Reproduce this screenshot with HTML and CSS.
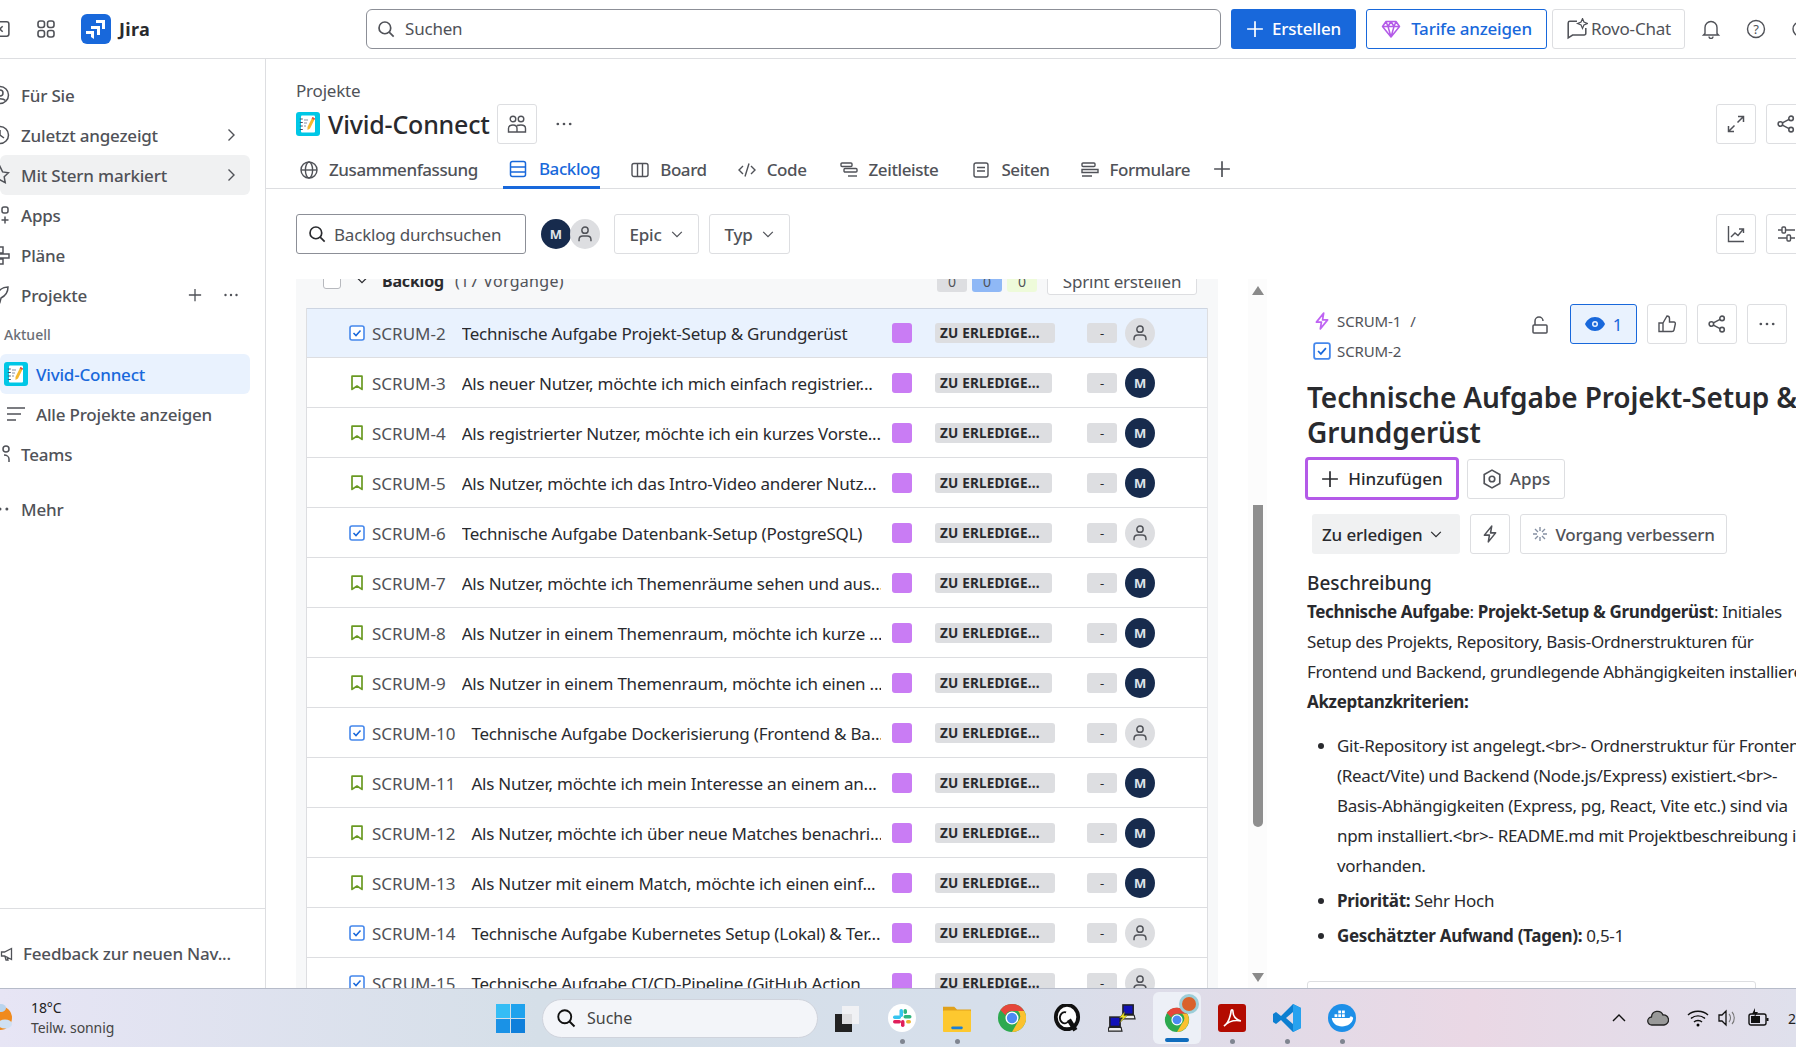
FILE: index.html
```html
<!DOCTYPE html>
<html lang="de">
<head>
<meta charset="utf-8">
<title>Jira – Vivid-Connect Backlog</title>
<link rel="stylesheet" href="styles.css">
</head>
<body>
<svg class="defs" width="0" height="0">
  <symbol id="task" viewBox="0 0 16 16"><rect x="1" y="1" width="14" height="14" rx="2" fill="#fff" stroke="#4688ec" stroke-width="1.6"/><path d="M4.5 8l2.5 2.6 4.5-5.2" fill="none" stroke="#1868db" stroke-width="1.5"/></symbol>
  <symbol id="story" viewBox="0 0 16 16"><path d="M3 1.2h10v13.2l-5-3.4-5 3.4z" fill="none" stroke="#6a9a23" stroke-width="1.7" stroke-linejoin="round"/></symbol>
  <symbol id="person" viewBox="0 0 16 16"><circle cx="8" cy="4.6" r="2.8" fill="none" stroke="currentColor" stroke-width="1.3"/><path d="M2.7 14.5v-1.5c0-2 1.5-3.2 3.4-3.2h3.8c1.900 0 3.400 1.200 3.400 3.200v1.500" fill="none" stroke="currentColor" stroke-width="1.3"/></symbol>
  <symbol id="chev" viewBox="0 0 16 16"><path d="M5.500 2.500l5.500 5.500-5.500 5.500" fill="none" stroke="currentColor" stroke-width="1.400"/></symbol>
  <symbol id="down" viewBox="0 0 16 16"><path d="M2.500 5.500l5.500 5.500 5.500-5.500" fill="none" stroke="currentColor" stroke-width="1.400"/></symbol>
  <symbol id="plus" viewBox="0 0 16 16"><path d="M8 1v14M1 8h14" fill="none" stroke="currentColor" stroke-width="1.500"/></symbol>
  <symbol id="dots" viewBox="0 0 16 16"><circle cx="2.500" cy="8" r="1.200" fill="currentColor"/><circle cx="8" cy="8" r="1.200" fill="currentColor"/><circle cx="13.500" cy="8" r="1.200" fill="currentColor"/></symbol>
  <symbol id="search" viewBox="0 0 16 16"><circle cx="7" cy="7" r="5.200" fill="none" stroke="currentColor" stroke-width="1.500"/><path d="M10.800 10.800l4 4" stroke="currentColor" stroke-width="1.500"/></symbol>
  <symbol id="share" viewBox="0 0 16 16"><g fill="none" stroke="currentColor" stroke-width="1.400"><circle cx="3" cy="8" r="2"/><circle cx="12.500" cy="3" r="2"/><circle cx="12.500" cy="13" r="2"/><path d="M4.800 7l5.900-3.100M4.800 9l5.900 3.100"/></g></symbol>
  <symbol id="project" viewBox="0 0 24 24"><rect width="24" height="24" rx="3" fill="#00c7e6"/><rect x="5" y="3.500" width="14" height="17" rx="1" fill="#fff"/><path d="M3.800 7h3M3.800 10.500h3M3.800 14h3M3.800 17.500h3" stroke="#44546f" stroke-width="1"/><path d="M8 8h4M8 11h3M8 14h2" stroke="#8590a2" stroke-width="1"/><path d="M16.500 5l2.500 1.500-5 10-2.500 1.500 0-3z" fill="#f5b82e"/><path d="M16.500 5l2.500 1.500-.8 1.500-2.500-1.500z" fill="#e5484d"/></symbol>
  <symbol id="bolt" viewBox="0 0 16 16"><path d="M9.500 1L3 9h4.500l-1 6L13 7H8.500z" fill="none" stroke="currentColor" stroke-width="1.400" stroke-linejoin="round"/></symbol>
</svg>

<div class="app">
  <header class="topbar">
    <svg class="tb-collapse" viewBox="0 0 16 16"><rect x="1" y="1.500" width="14" height="13" rx="2" fill="none" stroke="currentColor" stroke-width="1.400"/><path d="M9.500 5.500L7 8l2.500 2.500" fill="none" stroke="currentColor" stroke-width="1.300"/></svg>
    <svg class="tb-grid" viewBox="0 0 18 18"><g fill="none" stroke="currentColor" stroke-width="1.600"><rect x="1" y="1" width="6.500" height="6.500" rx="2.200"/><rect x="10.500" y="1" width="6.500" height="6.500" rx="2.200"/><rect x="1" y="10.500" width="6.500" height="6.500" rx="2.200"/><rect x="10.500" y="10.500" width="6.500" height="6.500" rx="2.200"/></g></svg>
    <svg class="tb-logo" viewBox="0 0 30 30"><rect width="30" height="30" rx="6" fill="#1868db"/><path d="M15 6h9v9h-3V9h-6zM10 12h9v9h-3v-6h-6zM5 17h8v8l-3-2v-3H5z" fill="#fff"/></svg>
    <span class="tb-name">Jira</span>
    <div class="tb-search"><svg class="ic18"><use href="#search"/></svg><span>Suchen</span></div>
    <button class="tb-btn create"><svg class="ic18"><use href="#plus"/></svg>Erstellen</button>
    <button class="tb-btn plans"><svg class="ic20" viewBox="0 0 20 20"><path d="M5 2.500h10l3.500 5L10 18 1.500 7.500zM1.500 7.500h17M7 7.500L10 18l3-10.500M5 2.500l2 5 3-5 3 5 2-5" fill="none" stroke="#b45ae8" stroke-width="1.500" stroke-linejoin="round"/></svg>Tarife anzeigen</button>
    <button class="tb-btn rovo"><svg class="ic22" viewBox="0 0 20 20"><path d="M10 3H3.500A1.500 1.500 0 0 0 2 4.500V18l4-2.500h10.500A1.500 1.500 0 0 0 18 14V9" fill="none" stroke="currentColor" stroke-width="1.400"/><path d="M15 .500l1.300 3.200 3.200 1.300-3.200 1.300L15 9.500l-1.300-3.200L10.500 5l3.200-1.300z" fill="none" stroke="currentColor" stroke-width="1.100"/></svg>Rovo-Chat</button>
    <svg class="tb-ico bell" viewBox="0 0 20 20"><path d="M4 14.500V8.500a6 6 0 0 1 12 0v6l1.500 1.500h-15zM8 17.500a2 2 0 0 0 4 0" fill="none" stroke="currentColor" stroke-width="1.400"/></svg>
    <svg class="tb-ico help" viewBox="0 0 20 20"><circle cx="10" cy="10" r="8.500" fill="none" stroke="currentColor" stroke-width="1.400"/><text x="10" y="14.500" text-anchor="middle" class="help-q">?</text></svg>
    <svg class="tb-ico gear" viewBox="0 0 20 20"><circle cx="10" cy="10" r="7" fill="none" stroke="currentColor" stroke-width="1.400"/></svg>
  </header>

  <div class="body">
    <nav class="sidebar">
      <a class="nav"><svg class="nav-i" viewBox="0 0 20 20"><circle cx="10" cy="10" r="8.500" fill="none" stroke="currentColor" stroke-width="1.500"/><circle cx="10" cy="8" r="3" fill="none" stroke="currentColor" stroke-width="1.500"/><path d="M4.500 15.500c2-2.500 9-2.500 11 0" fill="none" stroke="currentColor" stroke-width="1.500"/></svg><span>Für Sie</span></a>
      <a class="nav"><svg class="nav-i" viewBox="0 0 20 20"><circle cx="10" cy="10" r="8.500" fill="none" stroke="currentColor" stroke-width="1.500"/><path d="M10 5v5l4 3" fill="none" stroke="currentColor" stroke-width="1.500"/></svg><span>Zuletzt angezeigt</span><svg class="nav-r"><use href="#chev"/></svg></a>
      <a class="nav hover"><svg class="nav-i" viewBox="0 0 20 20"><path d="M10 1.500l2.600 5.400 5.900.8-4.300 4.100 1 5.900-5.200-2.800-5.200 2.800 1-5.900L1.500 7.700l5.900-.8z" fill="none" stroke="currentColor" stroke-width="1.500"/></svg><span>Mit Stern markiert</span><svg class="nav-r"><use href="#chev"/></svg></a>
      <a class="nav"><svg class="nav-i" viewBox="0 0 20 20"><g fill="none" stroke="currentColor" stroke-width="1.500"><rect x="2" y="2" width="6" height="6" rx="2"/><rect x="12" y="2" width="6" height="6" rx="2"/><rect x="2" y="12" width="6" height="6" rx="2"/><path d="M15 11.500v7M11.500 15h7"/></g></svg><span>Apps</span></a>
      <a class="nav"><svg class="nav-i" viewBox="0 0 20 20"><g fill="none" stroke="currentColor" stroke-width="1.500"><path d="M3 2h10v6H3zM3 9h16v4H3zM3 14h10v5H3z"/></g></svg><span>Pläne</span></a>
      <a class="nav"><svg class="nav-i" viewBox="0 0 20 20"><path d="M18 2c-5 0-9 3-11 7l-4 1 3 2-1 3 3-1 2 3 1-4c4-2 7-6 7-11z" fill="none" stroke="currentColor" stroke-width="1.500"/></svg><span>Projekte</span><svg class="nav-plus"><use href="#plus"/></svg><svg class="nav-dots"><use href="#dots"/></svg></a>
      <div class="nav-label">Aktuell</div>
      <a class="nav active sub"><svg class="proj-i"><use href="#project"/></svg><span>Vivid-Connect</span></a>
      <a class="nav sub"><svg class="all-i" viewBox="0 0 18 14"><path d="M0 1h18M0 7h14M0 13h9" stroke="currentColor" stroke-width="1.400"/></svg><span>Alle Projekte anzeigen</span></a>
      <a class="nav"><svg class="nav-i" viewBox="0 0 20 20"><g fill="none" stroke="currentColor" stroke-width="1.500"><circle cx="6" cy="5" r="3"/><circle cx="16" cy="5" r="3"/><path d="M1 18v-3c0-2 2-4 5-4 1 0 2 0 3 1M19 18v-3c0-2-2-4-5-4"/></g></svg><span>Teams</span></a>
      <a class="nav more"><svg class="nav-i"><use href="#dots"/></svg><span>Mehr</span></a>
      <a class="feedback"><svg class="fb-i" viewBox="0 0 16 16"><path d="M1.500 6v4h3l7 3.500V2.500l-7 3.500zM5 10.500l1 3.500h2l-1-3" fill="none" stroke="currentColor" stroke-width="1.300"/></svg><span>Feedback zur neuen Nav...</span></a>
    </nav>

    <main class="main">
      <div class="head">
        <div class="crumb">Projekte</div>
        <div class="title-row">
          <svg class="title-ic"><use href="#project"/></svg>
          <h1>Vivid-Connect</h1>
          <button class="sq people"><svg class="ic20" viewBox="0 0 20 20"><g fill="none" stroke="currentColor" stroke-width="1.400"><circle cx="6" cy="5" r="2.800"/><circle cx="14" cy="5" r="2.800"/><path d="M1.500 18v-3.500c0-2 1.800-3.500 4.500-3.500s4 1.500 4 3.500V18zM10 11.500c1-.5 2.500-.5 4-.5 2.700 0 4.500 1.500 4.500 3.500V18H10"/></g></svg></button>
          <svg class="title-dots"><use href="#dots"/></svg>
          <div class="head-right">
            <button class="sq"><svg class="ic18" viewBox="0 0 18 18"><path d="M11 1.500h5.500V7M16.500 1.500l-6 6M7 16.500H1.500V11M1.500 16.500l6-6" fill="none" stroke="currentColor" stroke-width="1.500"/></svg></button>
            <button class="sq"><svg class="ic18"><use href="#share"/></svg></button>
          </div>
        </div>
      </div>

      <div class="tabs">
        <a class="tab"><svg class="ic18" viewBox="0 0 18 18"><g fill="none" stroke="currentColor" stroke-width="1.400"><circle cx="9" cy="9" r="8"/><ellipse cx="9" cy="9" rx="3.600" ry="8"/><path d="M1 9h16"/></g></svg>Zusammenfassung</a>
        <a class="tab current"><svg class="ic18" viewBox="0 0 18 18"><g fill="none" stroke="currentColor" stroke-width="1.500"><rect x="1.500" y="1.500" width="15" height="15" rx="2"/><path d="M1.500 7h15M1.500 12h15"/></g></svg>Backlog</a>
        <a class="tab"><svg class="ic18" viewBox="0 0 18 18"><g fill="none" stroke="currentColor" stroke-width="1.400"><rect x="1" y="2.500" width="16" height="13" rx="2"/><path d="M6.500 2.500v13M11.500 2.500v13"/></g></svg>Board</a>
        <a class="tab"><svg class="ic18" viewBox="0 0 18 18"><path d="M5 5L1 9l4 4M13 5l4 4-4 4M11 2.500L7 15.500" fill="none" stroke="currentColor" stroke-width="1.400"/></svg>Code</a>
        <a class="tab"><svg class="ic18" viewBox="0 0 18 18"><g fill="none" stroke="currentColor" stroke-width="1.400"><rect x="1" y="2" width="11" height="3.500" rx="1"/><rect x="4" y="7.500" width="13" height="3.500" rx="1"/><path d="M8 15h9"/></g></svg>Zeitleiste</a>
        <a class="tab"><svg class="ic18" viewBox="0 0 18 18"><g fill="none" stroke="currentColor" stroke-width="1.400"><rect x="2" y="2" width="14" height="14" rx="2"/><path d="M5 6.500h8M5 10h8"/></g></svg>Seiten</a>
        <a class="tab"><svg class="ic18" viewBox="0 0 18 18"><g fill="none" stroke="currentColor" stroke-width="1.400"><rect x="1" y="2" width="13" height="3.500" rx="1"/><path d="M1 8.500h16v3H1zM1 15h10"/></g></svg>Formulare</a>
        <svg class="tab-plus"><use href="#plus"/></svg>
      </div>

      <div class="tools">
        <div class="bl-search"><svg class="ic18"><use href="#search"/></svg><span>Backlog durchsuchen</span></div>
        <div class="avas"><span class="ava m">M</span><span class="ava u"><svg class="ic18"><use href="#person"/></svg></span></div>
        <button class="filter">Epic<svg class="ic14"><use href="#down"/></svg></button>
        <button class="filter">Typ<svg class="ic14"><use href="#down"/></svg></button>
        <div class="tools-right">
          <button class="sq"><svg class="ic18" viewBox="0 0 18 18"><path d="M1.500 1v15.500H17M4 12l4-4 3 2.500 5-6M12 4h4.500v4" fill="none" stroke="currentColor" stroke-width="1.400"/></svg></button>
          <button class="sq"><svg class="ic18" viewBox="0 0 18 18"><g fill="none" stroke="currentColor" stroke-width="1.400"><path d="M1 5h4M9 5h9M1 13h9M14 13h4"/><rect x="5" y="2" width="3.500" height="6" rx="1"/><rect x="10" y="10" width="3.500" height="6" rx="1"/></g></svg></button>
        </div>
      </div>

      <div class="content">
        <section class="backlog">
          <div class="bl-head">
            <span class="bl-check"></span>
            <svg class="bl-chev"><use href="#down"/></svg>
            <b class="bl-name">Backlog</b><span class="bl-count">(17 Vorgänge)</span>
            <span class="badges"><i class="bd grey">0</i><i class="bd blue">0</i><i class="bd green">0</i></span>
            <button class="sprint">Sprint erstellen</button>
          </div>
          <div class="rows">
            <div class="row selected"><svg class="ti"><use href="#task"/></svg><span class="key">SCRUM-2</span><span class="sum">Technische Aufgabe Projekt-Setup &amp; Grundgerüst</span><span class="epic"></span><span class="st-cell"><span class="status w3">ZU ERLEDIGE...</span></span><span class="est">-</span><span class="ava u"><svg class="ic18"><use href="#person"/></svg></span></div>
            <div class="row"><svg class="ti"><use href="#story"/></svg><span class="key">SCRUM-3</span><span class="sum">Als neuer Nutzer, möchte ich mich einfach registrier...</span><span class="epic"></span><span class="st-cell"><span class="status">ZU ERLEDIGE...</span></span><span class="est">-</span><span class="ava m">M</span></div>
            <div class="row"><svg class="ti"><use href="#story"/></svg><span class="key">SCRUM-4</span><span class="sum">Als registrierter Nutzer, möchte ich ein kurzes Vorste...</span><span class="epic"></span><span class="st-cell"><span class="status">ZU ERLEDIGE...</span></span><span class="est">-</span><span class="ava m">M</span></div>
            <div class="row"><svg class="ti"><use href="#story"/></svg><span class="key">SCRUM-5</span><span class="sum">Als Nutzer, möchte ich das Intro-Video anderer Nutz...</span><span class="epic"></span><span class="st-cell"><span class="status">ZU ERLEDIGE...</span></span><span class="est">-</span><span class="ava m">M</span></div>
            <div class="row"><svg class="ti"><use href="#task"/></svg><span class="key">SCRUM-6</span><span class="sum">Technische Aufgabe Datenbank-Setup (PostgreSQL)</span><span class="epic"></span><span class="st-cell"><span class="status">ZU ERLEDIGE...</span></span><span class="est">-</span><span class="ava u"><svg class="ic18"><use href="#person"/></svg></span></div>
            <div class="row"><svg class="ti"><use href="#story"/></svg><span class="key">SCRUM-7</span><span class="sum">Als Nutzer, möchte ich Themenräume sehen und aus...</span><span class="epic"></span><span class="st-cell"><span class="status">ZU ERLEDIGE...</span></span><span class="est">-</span><span class="ava m">M</span></div>
            <div class="row"><svg class="ti"><use href="#story"/></svg><span class="key">SCRUM-8</span><span class="sum">Als Nutzer in einem Themenraum, möchte ich kurze ...</span><span class="epic"></span><span class="st-cell"><span class="status">ZU ERLEDIGE...</span></span><span class="est">-</span><span class="ava m">M</span></div>
            <div class="row"><svg class="ti"><use href="#story"/></svg><span class="key">SCRUM-9</span><span class="sum">Als Nutzer in einem Themenraum, möchte ich einen ...</span><span class="epic"></span><span class="st-cell"><span class="status">ZU ERLEDIGE...</span></span><span class="est">-</span><span class="ava m">M</span></div>
            <div class="row"><svg class="ti"><use href="#task"/></svg><span class="key">SCRUM-10</span><span class="sum">Technische Aufgabe Dockerisierung (Frontend &amp; Ba...</span><span class="epic"></span><span class="st-cell"><span class="status w3">ZU ERLEDIGE...</span></span><span class="est">-</span><span class="ava u"><svg class="ic18"><use href="#person"/></svg></span></div>
            <div class="row"><svg class="ti"><use href="#story"/></svg><span class="key">SCRUM-11</span><span class="sum">Als Nutzer, möchte ich mein Interesse an einem an...</span><span class="epic"></span><span class="st-cell"><span class="status w3">ZU ERLEDIGE...</span></span><span class="est">-</span><span class="ava m">M</span></div>
            <div class="row"><svg class="ti"><use href="#story"/></svg><span class="key">SCRUM-12</span><span class="sum">Als Nutzer, möchte ich über neue Matches benachri...</span><span class="epic"></span><span class="st-cell"><span class="status w3">ZU ERLEDIGE...</span></span><span class="est">-</span><span class="ava m">M</span></div>
            <div class="row"><svg class="ti"><use href="#story"/></svg><span class="key">SCRUM-13</span><span class="sum">Als Nutzer mit einem Match, möchte ich einen einf...</span><span class="epic"></span><span class="st-cell"><span class="status w3">ZU ERLEDIGE...</span></span><span class="est">-</span><span class="ava m">M</span></div>
            <div class="row"><svg class="ti"><use href="#task"/></svg><span class="key">SCRUM-14</span><span class="sum">Technische Aufgabe Kubernetes Setup (Lokal) &amp; Ter...</span><span class="epic"></span><span class="st-cell"><span class="status w3">ZU ERLEDIGE...</span></span><span class="est">-</span><span class="ava u"><svg class="ic18"><use href="#person"/></svg></span></div>
            <div class="row"><svg class="ti"><use href="#task"/></svg><span class="key">SCRUM-15</span><span class="sum">Technische Aufgabe CI/CD-Pipeline (GitHub Action</span><span class="epic"></span><span class="st-cell"><span class="status w3">ZU ERLEDIGE...</span></span><span class="est">-</span><span class="ava u"><svg class="ic18"><use href="#person"/></svg></span></div>
          </div>
        </section>

        <div class="sbar"><i class="arrow up"></i><i class="thumb"></i><i class="arrow dn"></i></div>

        <aside class="detail">
          <div class="d-top">
            <div class="d-crumbs">
              <div class="d-crumb"><svg class="d-ic" viewBox="0 0 16 16"><path d="M9.500 1L3 9h4.500l-1 6L13 7H8.500z" fill="none" stroke="#bf63f3" stroke-width="1.500" stroke-linejoin="round"/></svg>SCRUM-1<span class="slash">/</span></div>
              <div class="d-crumb"><svg class="d-ic"><use href="#task"/></svg>SCRUM-2</div>
            </div>
            <svg class="lock" viewBox="0 0 18 20"><path d="M3 10V6a4 4 0 0 1 8 0M2 10h12a1 1 0 0 1 1 1v6a1 1 0 0 1-1 1H2a1 1 0 0 1-1-1v-6a1 1 0 0 1 1-1z" fill="none" stroke="currentColor" stroke-width="1.500"/></svg>
            <button class="watch"><svg class="eye" viewBox="0 0 20 14"><path d="M10 0C5 0 1.500 3.500 0 7c1.500 3.500 5 7 10 7s8.500-3.500 10-7c-1.500-3.500-5-7-10-7z" fill="#1868db"/><circle cx="10" cy="7" r="3" fill="#e9f2fe"/><circle cx="10" cy="7" r="1.500" fill="#1868db"/></svg>1</button>
            <button class="sq"><svg class="ic20" viewBox="0 0 20 20"><path d="M6 9l4-7c1.500 0 2.500 1 2.500 2.500V8H17c1 0 1.500 1 1.300 2l-1.300 6c-.2 1-1 1.500-2 1.500H6zM2 9h4v8.500H2z" fill="none" stroke="currentColor" stroke-width="1.400"/></svg></button>
            <button class="sq"><svg class="ic18"><use href="#share"/></svg></button>
            <button class="sq"><svg class="ic18"><use href="#dots"/></svg></button>
          </div>
          <h2>Technische Aufgabe Projekt-Setup &amp;<br>Grundgerüst</h2>
          <div class="d-actions">
            <button class="add"><svg class="ic18"><use href="#plus"/></svg>Hinzufügen</button>
            <button class="btn apps"><svg class="ic20" viewBox="0 0 18 18"><path d="M9 1l7 4v8l-7 4-7-4V5z" fill="none" stroke="currentColor" stroke-width="1.500"/><circle cx="9" cy="9" r="2.500" fill="none" stroke="currentColor" stroke-width="1.500"/></svg>Apps</button>
          </div>
          <div class="d-status">
            <button class="status-btn">Zu erledigen<svg class="ic14"><use href="#down"/></svg></button>
            <button class="sq"><svg class="ic18"><use href="#bolt"/></svg></button>
            <button class="btn improve"><svg class="ic16" viewBox="0 0 16 16"><path d="M8 1v4M8 11v4M1 8h4M11 8h4M3 3l3 3M10 10l3 3M13 3l-3 3M6 10l-3 3" stroke="#8590a2" stroke-width="1.400"/></svg>Vorgang verbessern</button>
          </div>
          <h3>Beschreibung</h3>
          <p><b>Technische Aufgabe</b>: <b>Projekt-Setup &amp; Grundgerüst</b>: Initiales<br>Setup des Projekts, Repository, Basis-Ordnerstrukturen für<br>Frontend und Backend, grundlegende Abhängigkeiten installieren.<br><b>Akzeptanzkriterien:</b></p>
          <ul>
            <li>Git-Repository ist angelegt.&lt;br&gt;- Ordnerstruktur für Frontend<br>(React/Vite) und Backend (Node.js/Express) existiert.&lt;br&gt;-<br>Basis-Abhängigkeiten (Express, pg, React, Vite etc.) sind via<br>npm installiert.&lt;br&gt;- README.md mit Projektbeschreibung ist<br>vorhanden.</li>
            <li><b>Priorität:</b> Sehr Hoch</li>
            <li><b>Geschätzter Aufwand (Tagen):</b> 0,5-1</li>
          </ul>
          <div class="editor"></div>
        </aside>
      </div>
    </main>
  </div>

  <footer class="taskbar">
    <div class="weather">
      <svg class="w-ic" viewBox="0 0 30 36"><circle cx="0" cy="18" r="12" fill="#f08a1d"/><ellipse cx="1" cy="8" rx="5" ry="4" fill="#b9d4ee"/><ellipse cx="5" cy="24" rx="7" ry="4.500" fill="#cfe0f2"/></svg>
      <div class="w-txt"><span>18°C</span><span>Teilw. sonnig</span></div>
    </div>
    <svg class="win" viewBox="0 0 29 29"><rect width="14" height="14" fill="#35bdf5"/><rect x="15" width="14" height="14" fill="#1fa2ed"/><rect y="15" width="14" height="14" fill="#1a92e6"/><rect x="15" y="15" width="14" height="14" fill="#0f7fdb"/></svg>
    <div class="t-search"><svg class="ic20"><use href="#search"/></svg><span>Suche</span></div>
    <div class="t-app first"><svg class="t-ic" viewBox="0 0 28 28"><rect x="2" y="10" width="17" height="18" fill="#222"/><rect x="9" y="2" width="17" height="18" fill="#f3f3f5" opacity=".9"/></svg></div>
    <div class="t-app open"><svg class="t-ic" viewBox="0 0 28 28"><circle cx="14" cy="14" r="14" fill="#fff"/><rect x="11.500" y="5" width="3.500" height="8" rx="1.700" fill="#36c5f0"/><rect x="5" y="11.500" width="8" height="3.500" rx="1.700" fill="#36c5f0"/><rect x="15.500" y="11" width="8" height="3.500" rx="1.700" fill="#2eb67d"/><rect x="15.500" y="5" width="3.500" height="5" rx="1.700" fill="#2eb67d"/><rect x="5" y="16" width="8" height="3.500" rx="1.700" fill="#e01e5a"/><rect x="13" y="16" width="3.500" height="7" rx="1.700" fill="#e01e5a"/><rect x="18" y="16" width="5" height="3.500" rx="1.700" fill="#ecb22e"/></svg></div>
    <div class="t-app open"><svg class="t-ic folder" viewBox="0 0 30 30"><path d="M0 3h12l3 3h15v4H0z" fill="#e0a11b"/><rect y="7" width="30" height="23" rx="1" fill="#fdc82f"/><rect x="9" y="24" width="12" height="3" rx="1" fill="#1a7fd6"/></svg></div>
    <div class="t-app"><svg class="t-ic" viewBox="0 0 30 30"><circle cx="15" cy="15" r="15" fill="#2da94f"/><path d="M15 0a15 15 0 0 1 13 7.500H15a7.500 7.500 0 0 0-7 4.500L2.500 6.500A15 15 0 0 1 15 0z" fill="#e5463a"/><path d="M28 7.500A15 15 0 0 1 15 30l6.500-11.500a7.500 7.500 0 0 0 0-11z" fill="#fbc12e"/><circle cx="15" cy="15" r="7" fill="#fff"/><circle cx="15" cy="15" r="5.500" fill="#4a8af4"/></svg></div>
    <div class="t-app"><svg class="t-ic" viewBox="0 0 30 30"><ellipse cx="15" cy="14" rx="12" ry="13" fill="#fff" stroke="#111" stroke-width="4"/><path d="M14 9a5 6 0 1 0 2 10" fill="none" stroke="#111" stroke-width="2"/><path d="M17 17l7 11" stroke="#111" stroke-width="5"/></svg></div>
    <div class="t-app"><svg class="t-ic" viewBox="0 0 30 30"><rect x="16" y="1" width="11" height="10" fill="#1212b8" stroke="#222" stroke-width="1.600"/><path d="M15 12h13l1 4H14z" fill="#eee" stroke="#222" stroke-width="1.200"/><rect x="2" y="14" width="11" height="10" fill="#1212b8" stroke="#222" stroke-width="1.600"/><path d="M1 25h13l1 4H0z" fill="#eee" stroke="#222" stroke-width="1.200"/><path d="M18 8l-6 7 4-.5-4 6.500 9-9-4 .5z" fill="#f2e61a" stroke="#333" stroke-width=".4"/></svg></div>
    <div class="t-app active"><svg class="t-ic" viewBox="0 0 30 30"><circle cx="15" cy="17" r="13" fill="#2da94f"/><path d="M15 4a13 13 0 0 1 11 6.500H15a6.500 6.500 0 0 0-6 4L4 9.500A13 13 0 0 1 15 4z" fill="#e5463a"/><path d="M26 10.500A13 13 0 0 1 15 30l5.500-9.500a6.500 6.500 0 0 0 0-10z" fill="#fbc12e"/><circle cx="15" cy="17" r="6" fill="#fff"/><circle cx="15" cy="17" r="4.800" fill="#4a8af4"/></svg><svg class="t-badge" viewBox="0 0 20 20"><circle cx="10" cy="10" r="10" fill="#9cced8"/><circle cx="10" cy="10" r="7" fill="#d9622b"/></svg></div>
    <div class="t-app open"><svg class="t-ic" viewBox="0 0 28 28"><rect width="28" height="28" rx="3" fill="#b30b00"/><path d="M6 22c3-2 6-8 7-14 0-3 2-3 2 0 0 4 3 8 8 9-5-1-12 0-17 5z" fill="none" stroke="#fff" stroke-width="1.600"/></svg></div>
    <div class="t-app open"><svg class="t-ic" viewBox="0 0 28 28"><path d="M20 0l8 4v20l-8 4-12-12-5 4-3-2V10l3-2 5 4zM20 8l-7 6 7 6z" fill="#0d7fd1"/><path d="M20 0l8 4v20l-8 4z" fill="#27a2ef"/></svg></div>
    <div class="t-app open"><svg class="t-ic" viewBox="0 0 30 30"><circle cx="15" cy="15" r="15" fill="#1d8fe8"/><path d="M4 15h18c1 0 2-1 2-2 1 0 3 1 3 2-1 6-6 9-12 9-6 0-10-3-11-9z" fill="#fff"/><g fill="#fff"><rect x="7" y="11" width="3" height="3"/><rect x="11" y="11" width="3" height="3"/><rect x="15" y="11" width="3" height="3"/><rect x="11" y="7" width="3" height="3"/><rect x="15" y="7" width="3" height="3"/></g></svg></div>
    <div class="tray">
      <svg class="tr up" viewBox="0 0 14 8"><path d="M1 7l6-6 6 6" fill="none" stroke="#111" stroke-width="1.400"/></svg>
      <svg class="tr cloud" viewBox="0 0 22 18"><path d="M5 16a4 4 0 0 1-.5-8A6 6 0 0 1 16 6a5 5 0 0 1 1 10z" fill="#999" stroke="#222" stroke-width="1.300"/></svg>
      <svg class="tr wifi" viewBox="0 0 22 18"><path d="M1 6c5-5 15-5 20 0M4 9.500c4-3.500 10-3.500 14 0M7 13c2-2 6-2 8 0" fill="none" stroke="#111" stroke-width="1.400"/><circle cx="11" cy="16" r="1.500"/></svg>
      <svg class="tr vol" viewBox="0 0 20 18"><path d="M2 6v6h3l4 4V2L5 6z" fill="none" stroke="#111" stroke-width="1.300"/><path d="M12 5c2 2 2 6 0 8M15 3c3 3 3 9 0 12" fill="none" stroke="#777" stroke-width="1.100"/></svg>
      <svg class="tr batt" viewBox="0 0 22 20"><rect x="1" y="6" width="17" height="11" rx="2" fill="none" stroke="#111" stroke-width="1.400"/><rect x="3" y="8" width="9" height="7" fill="#111"/><rect x="18.500" y="10" width="2" height="3" fill="#111"/><path d="M7 0l-3 6h3l-1 4 4-6H7z" fill="#111"/></svg>
      <span class="clock">2</span>
    </div>
  </footer>
</div>
</body>
</html>
```
FILE: styles.css
```css
* { box-sizing: border-box; }
html, body { margin: 0; height: 100%; overflow: hidden; background: #fff; }
body { font-family: "Noto Sans", "Open Sans", sans-serif; font-size: 16px; color: #292a2e; }
button { font: inherit; color: inherit; background: #fff; cursor: pointer; }
b { font-weight: 700; }
.defs { position: absolute; }
.ic14 { width: 14px; height: 14px; flex: none; }
.ic16 { width: 16px; height: 16px; flex: none; }
.ic18 { width: 18px; height: 18px; flex: none; }
.ic20 { width: 20px; height: 20px; flex: none; }
.ic22 { width: 22px; height: 22px; flex: none; }

.app { width: 1796px; height: 1047px; display: flex; flex-direction: column; overflow: hidden; }

/* top bar */
.topbar { height: 59px; flex: none; display: flex; align-items: center; border-bottom: 1px solid #dddee1; color: #505258; padding-bottom: 1px; }
.topbar > * { flex: none; }
.tb-collapse { width: 18px; height: 18px; margin-left: -8px; }
.tb-grid { width: 18px; height: 18px; margin-left: 27px; }
.tb-logo { width: 30px; height: 30px; margin-left: 26px; }
.tb-name { margin-left: 8px; font-weight: 700; font-size: 18px; letter-spacing: .3px; color: #292a2e; width: 247px; }
.tb-search { width: 855px; height: 40px; border: 1px solid #8c8f97; border-radius: 6px; display: flex; align-items: center; gap: 10px; padding-left: 10px; color: #505258; font-size: 17px; letter-spacing: -.2px; }
.tb-btn { height: 40px; border-radius: 3px; display: flex; align-items: center; justify-content: center; font-size: 17px; letter-spacing: -.2px; }
.create { width: 125px; margin-left: 10px; background: #1868db; border: 0; color: #fff; font-weight: 500; gap: 8px; }
.plans { width: 181px; margin-left: 10px; border: 1px solid #1868db; color: #1868db; font-weight: 500; gap: 10px; }
.rovo { width: 133px; margin-left: 5px; border: 1px solid #dddee1; color: #505258; gap: 3px; }
.tb-ico { width: 20px; height: 20px; }
.bell { margin-left: 16px; }
.help { margin-left: 25px; }
.help-q { font-size: 13px; fill: #505258; }
.gear { margin-left: 24px; }

/* layout */
.body { flex: 1; min-height: 0; display: flex; }
.sidebar { width: 266px; flex: none; border-right: 1px solid #dddee1; padding-top: 16px; display: flex; flex-direction: column; color: #505258; font-size: 17px; letter-spacing: -.2px; }
.nav { height: 40px; margin-right: 15px; display: flex; align-items: center; gap: 11px; border-radius: 6px; font-weight: 500; flex: none; position: relative; }
.nav-i { width: 20px; height: 20px; margin-left: -10px; flex: none; }
.nav-r { width: 16px; height: 16px; margin-left: auto; margin-right: 11px; color: #505258; }
.nav-plus { width: 14px; height: 14px; margin-left: auto; margin-right: 10px; }
.nav-dots { width: 16px; height: 16px; margin-right: 11px; }
.nav.hover { background: #f0f1f2; }
.nav-label { height: 38px; display: flex; align-items: center; padding-left: 4px; font-size: 14px; font-weight: 500; color: #6b6e76; letter-spacing: 0; margin-bottom: 1px; }
.nav.active { background: #e9f2fe; color: #1868db; }
.nav.sub { gap: 8px; }
.proj-i { width: 24px; height: 24px; margin-left: 4px; flex: none; }
.all-i { width: 18px; height: 14px; margin-left: 7px; margin-right: 3px; flex: none; }
.nav.more { margin-top: 15px; }
.feedback { margin-top: auto; height: 80px; border-top: 1px solid #dddee1; display: flex; align-items: flex-start; padding-top: 33px; gap: 7px; font-weight: 500; margin-right: 0; }
.fb-i { width: 16px; height: 16px; flex: none; margin-top: 4px; margin-left: 0; }

.main { flex: 1; min-width: 0; display: flex; flex-direction: column; }
.head { padding: 20px 0 0 30px; height: 85px; flex: none; }
.crumb { font-size: 17px; color: #505258; line-height: 24px; letter-spacing: -.2px; }
.title-row { display: flex; align-items: center; height: 40px; margin-top: 1px; }
.title-ic { width: 24px; height: 24px; flex: none; }
h1 { margin: 0 0 0 8px; font-size: 25px; font-weight: 500; letter-spacing: -.2px; }
.sq { width: 40px; height: 40px; flex: none; border: 1px solid #dddee1; border-radius: 3px; display: flex; align-items: center; justify-content: center; padding: 0; color: #505258; }
.people { margin-left: 7px; }
.title-dots { width: 20px; height: 18px; margin-left: 17px; color: #505258; }
.head-right, .tools-right { margin-left: auto; display: flex; gap: 10px; margin-right: -10px; }

.tabs { height: 45px; flex: none; border-bottom: 1px solid #dddee1; padding: 0 0 0 34px; display: flex; align-items: stretch; }
.tab { display: flex; align-items: center; gap: 11px; color: #505258; font-size: 17px; font-weight: 500; letter-spacing: -.42px; margin-right: 31px; padding-top: 7px; height: 44px; }
.tab:nth-child(1) { margin-right: 25px; }
.tab:nth-child(4) { margin-right: 33px; }
.tab:nth-child(5) { margin-right: 34px; }
.tab:nth-child(7) { margin-right: 23px; }
.tab.current { color: #1868db; padding: 7px 0 0 6px; border-bottom: 3px solid #1868db; height: 45px; gap: 12px; }
.tab-plus { width: 18px; height: 18px; color: #505258; align-self: center; margin-top: 6px; }

.tools { height: 90px; flex: none; padding: 25px 0 0 30px; display: flex; align-items: flex-start; }
.bl-search { width: 230px; height: 40px; border: 1px solid #8c8f97; border-radius: 3px; display: flex; align-items: center; padding-left: 11px; gap: 8px; color: #505258; font-size: 17px; letter-spacing: -.2px; flex: none; }
.bl-search .ic18 { color: #292a2e; }
.avas { display: flex; margin-left: 15px; margin-top: 5px; }
.ava { width: 30px; height: 30px; border-radius: 50%; display: flex; align-items: center; justify-content: center; flex: none; font-size: 13px; font-weight: 700; }
.ava.m { background: #172b4d; color: #dfe3ea; }
.ava.u { background: #dddee1; color: #505258; }
.avas .ava + .ava { margin-left: -1px; }
.filter { height: 40px; border: 1px solid #dddee1; border-radius: 3px; display: flex; align-items: center; justify-content: center; gap: 8px; font-size: 17px; font-weight: 500; color: #505258; letter-spacing: -.2px; flex: none; width: 85px; margin-left: 10px; }
.avas + .filter { margin-left: 14px; }
.filter + .filter { width: 81px; }

.content { flex: 1; min-height: 0; display: flex; padding-left: 30px; }
.backlog { width: 922px; flex: none; background: #f7f8f9; overflow: hidden; padding-left: 10px; }
.bl-head { height: 29px; display: flex; align-items: flex-start; overflow: hidden; color: #505258; }
.bl-check { width: 18px; height: 18px; border: 1.500px solid #b7b9be; border-radius: 3px; background: #fff; margin: -8px 0 0 17px; flex: none; }
.bl-chev { width: 14px; height: 14px; margin: -6px 0 0 14px; flex: none; color: #292a2e; }
.bl-name { font-size: 16px; line-height: 22px; margin: -9px 0 0 13px; color: #292a2e; letter-spacing: -.2px; }
.bl-count { font-size: 16px; line-height: 22px; margin: -9px 0 0 11px; letter-spacing: .3px; }
.badges { display: flex; gap: 5px; margin: -7px 0 0 auto; }
.bd { width: 30px; height: 20px; border-radius: 3px; text-align: center; font-style: normal; font-size: 14px; line-height: 20px; color: #505258; }
.bd.grey { background: #dddee1; }
.bd.blue { background: #8fb8f6; }
.bd.green { background: #eefbda; }
.sprint { width: 150px; height: 28px; margin: -12px 21px 0 10px; border: 1px solid #dddee1; border-radius: 3px; font-size: 17px; color: #505258; padding: 0; letter-spacing: -.2px; flex: none; }

.rows { background: #fff; width: 902px; border-left: 1px solid #dddee1; border-right: 1px solid #dddee1; }
.row { height: 50px; display: flex; align-items: center; border-bottom: 1px solid #dddee1; padding: 1px 52px 0 42px; font-size: 17px; letter-spacing: -.22px; white-space: nowrap; }
.row.selected { background: #e9f2fe; border-top: 1px solid #cdd5e2; border-bottom-color: #dddee1; padding-top: 0; }
.ti { width: 16px; height: 16px; flex: none; margin-right: 7px; }
.key { color: #505258; margin-right: 16px; flex: none; letter-spacing: 0; }
.sum { flex: 1; min-width: 0; overflow: hidden; color: #292a2e; }
.epic { width: 20px; height: 20px; border-radius: 3px; background: #c97cf4; flex: none; margin: 0 23px 0 11px; }
.st-cell { width: 152px; flex: none; }
.status { display: block; width: 117px; height: 20px; line-height: 20px; background: #dddee1; border-radius: 3px; padding-left: 5px; font-size: 13.500px; font-weight: 700; letter-spacing: .2px; overflow: hidden; color: #292a2e; }
.status.w3 { width: 120px; }
.est { width: 30px; height: 20px; background: #dddee1; border-radius: 3px; text-align: center; line-height: 20px; font-size: 13px; flex: none; margin-right: 8px; }

.sbar { width: 19px; flex: none; margin-left: 30px; background: #fcfcfc; display: flex; flex-direction: column; align-items: center; padding: 7px 0 6px; }
.arrow { width: 0; height: 0; border-left: 6px solid transparent; border-right: 6px solid transparent; flex: none; }
.arrow.up { border-bottom: 9px solid #8a8a8a; }
.arrow.dn { border-top: 9px solid #8a8a8a; margin-top: auto; }
.thumb { width: 10px; height: 322px; margin-top: 210px; background: #8f8f8f; border-radius: 0 0 5px 5px; flex: none; }

.detail { width: 489px; flex: none; padding: 25px 0 0 40px; white-space: nowrap; }
.d-top { display: flex; align-items: flex-start; gap: 10px; width: 480px; }
.d-crumbs { width: 217px; padding-left: 6px; font-size: 15px; color: #505258; padding-top: 2px; letter-spacing: -.1px; }
.d-crumb { height: 30px; display: flex; align-items: center; gap: 6px; }
.d-ic { width: 18px; height: 18px; flex: none; }
.slash { margin-left: 3px; }
.lock { width: 18px; height: 20px; margin: 11px 10px 0 0; color: #505258; flex: none; }
.watch { width: 67px; height: 40px; background: #e9f2fe; border: 1px solid #1868db; border-radius: 3px; color: #1868db; display: flex; align-items: center; justify-content: center; gap: 8px; padding: 0; font-size: 17px; }
.eye { width: 20px; height: 14px; }
h2 { margin: 14px 0 0; font-size: 28px; line-height: 35px; font-weight: 600; letter-spacing: -.1px; color: #292a2e; }
.d-actions { display: flex; align-items: center; gap: 8px; margin: 7px 0 0 -2px; height: 43px; }
.add { width: 154px; height: 43px; border: 3px solid #b45ae8; border-radius: 4px; display: flex; align-items: center; justify-content: center; gap: 9px; font-size: 17px; font-weight: 500; color: #292a2e; padding: 0; }
.btn { height: 40px; border: 1px solid #dddee1; border-radius: 3px; padding: 0 13px 0 12px; display: flex; align-items: center; gap: 7px; font-size: 17px; font-weight: 500; color: #505258; }
.btn.apps { width: 98px; justify-content: center; padding: 0; gap: 8px; }
.d-status { display: flex; gap: 10px; margin: 14px 0 0 5px; }
.btn.improve { width: 207px; justify-content: center; letter-spacing: -.25px; padding: 0; }
.status-btn { width: 148px; height: 40px; border: 0; background: #f0f1f2; border-radius: 3px; display: flex; align-items: center; justify-content: flex-start; gap: 7px; font-size: 17px; font-weight: 500; color: #292a2e; padding: 0 0 0 10px; letter-spacing: -.15px; }
h3 { margin: 16px 0 0; font-size: 19px; line-height: 26px; font-weight: 500; color: #292a2e; }
p { margin: 1px 0 0; font-size: 17px; line-height: 30px; letter-spacing: -.35px; color: #292a2e; }
ul { margin: 14px 0 0; padding: 0 0 0 30px; font-size: 17px; line-height: 30px; letter-spacing: -.3px; color: #292a2e; }
li + li { margin-top: 5px; }
.editor { margin-top: 30px; height: 60px; border: 1px solid #dddee1; border-radius: 3px; }

/* taskbar */
.taskbar { height: 59px; flex: none; display: flex; align-items: center; border-top: 1px solid #b6bbc9; background: linear-gradient(90deg, #e7e5f5 0%, #d5dfe8 30%, #d6dfeb 55%, #ead8e5 82%, #dfe0ec 100%); position: relative; }
.weather { width: 496px; flex: none; display: flex; align-items: center; gap: 1px; }
.w-ic { width: 30px; height: 36px; flex: none; }
.w-txt { display: flex; flex-direction: column; font-size: 14px; line-height: 20px; color: #222; letter-spacing: -.1px; }
.w-txt span + span { color: #444; }
.win { width: 29px; height: 29px; flex: none; margin-right: 17px; }
.t-search { width: 276px; height: 39px; background: #f3f5f9; border: 1px solid #cfd3dc; border-radius: 20px; display: flex; align-items: center; gap: 11px; padding-left: 13px; font-size: 16px; color: #444; flex: none; }
.t-search .ic20 { color: #111; }
.t-app { width: 55px; height: 58px; flex: none; display: flex; align-items: center; justify-content: center; position: relative; }
.t-app.first { margin-left: 1px; }
.t-ic { width: 28px; height: 28px; }
.t-app.open::after { content: ""; position: absolute; bottom: 3px; left: 50%; width: 5px; height: 5px; margin-left: -2px; border-radius: 50%; background: #7f8590; }
.t-app.active { background: #edf0f7; border-radius: 6px; height: 52px; width: 48px; margin: 0 3px 0 4px; }
.t-app.active::after { content: ""; position: absolute; bottom: 2px; left: 12px; width: 24px; height: 4px; border-radius: 2px; background: #0f6cbd; }
.t-badge { position: absolute; width: 20px; height: 20px; top: 2px; right: 2px; }
.tray { display: flex; align-items: center; margin-left: 243px; flex: none; }
.tr { flex: none; }
.tr.up { width: 14px; height: 8px; }
.tr.cloud { width: 22px; height: 18px; margin-left: 21px; }
.tr.wifi { width: 22px; height: 18px; margin-left: 18px; }
.tr.vol { width: 20px; height: 18px; margin-left: 8px; }
.tr.batt { width: 22px; height: 20px; margin-left: 11px; }
.clock { font-size: 14px; margin-left: 18px; color: #222; }
```
